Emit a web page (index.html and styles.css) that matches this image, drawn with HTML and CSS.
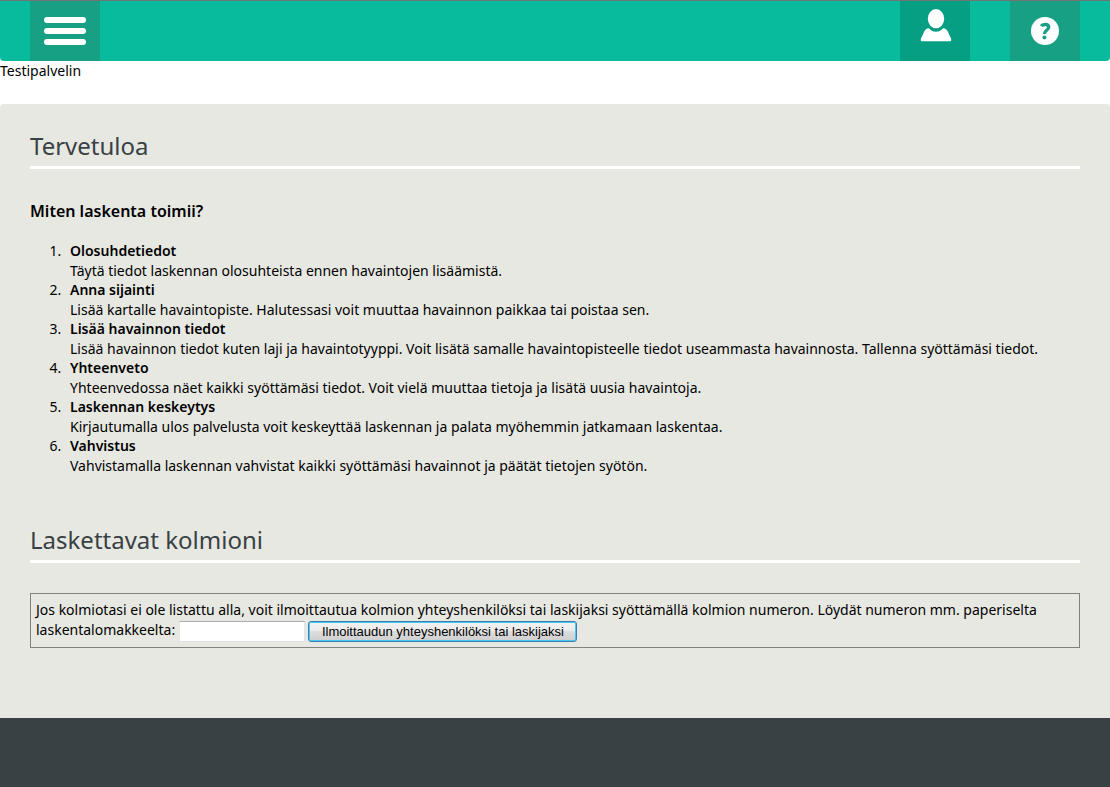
FILE: index.html
```html
<!DOCTYPE html>
<html lang="fi">
<head>
<meta charset="utf-8">
<title>Tervetuloa</title>
<link rel="stylesheet" href="styles.css">
</head>
<body>
<header class="topbar">
  <button class="bar-button" type="button" aria-label="Valikko">
    <svg width="42" height="28" viewBox="0 0 42 28" fill="#fff"><rect width="42" height="6" rx="3"/><rect y="11" width="42" height="6" rx="3"/><rect y="22" width="42" height="6" rx="3"/></svg>
  </button>
  <div class="bar-actions">
    <button class="bar-button bar-button-user" type="button" aria-label="Käyttäjä">
      <svg width="32" height="34" viewBox="0 0 32 34" fill="#fff"><ellipse cx="16" cy="9.7" rx="8.2" ry="9.6"/><path d="M9 19.200C12.500 24 19.500 24 23 19.200C25.500 19.400 26.500 20.200 27.500 22L31 29.500C31.700 31.500 31 32.300 29.500 32.300H2.500C1 32.300 .3 31.500 1 29.500L4.500 22C5.500 20.200 6.500 19.400 9 19.200Z"/></svg>
    </button>
    <button class="bar-button" type="button" aria-label="Ohje">
      <svg width="28" height="28" viewBox="0 0 28 28"><circle cx="14" cy="14" r="14" fill="#fff"/><path d="M10.300 9.200C11.500 7.200 17.700 6.100 17.700 10.300C17.700 13.100 13.500 13 13.500 17" fill="none" stroke="#18a085" stroke-width="3.400"/><circle cx="13.400" cy="20.400" r="2" fill="#18a085"/></svg>
    </button>
  </div>
</header>
<p class="server-note">Testipalvelin</p>
<main class="content">
  <h1 class="section-title">Tervetuloa</h1>
  <h2 class="subtitle">Miten laskenta toimii?</h2>
  <ol class="steps">
    <li><strong>Olosuhdetiedot</strong><p>Täytä tiedot laskennan olosuhteista ennen havaintojen lisäämistä.</p></li>
    <li><strong>Anna sijainti</strong><p>Lisää kartalle havaintopiste. Halutessasi voit muuttaa havainnon paikkaa tai poistaa sen.</p></li>
    <li><strong>Lisää havainnon tiedot</strong><p>Lisää havainnon tiedot kuten laji ja havaintotyyppi. Voit lisätä samalle havaintopisteelle tiedot useammasta havainnosta. Tallenna syöttämäsi tiedot.</p></li>
    <li><strong>Yhteenveto</strong><p>Yhteenvedossa näet kaikki syöttämäsi tiedot. Voit vielä muuttaa tietoja ja lisätä uusia havaintoja.</p></li>
    <li><strong>Laskennan keskeytys</strong><p>Kirjautumalla ulos palvelusta voit keskeyttää laskennan ja palata myöhemmin jatkamaan laskentaa.</p></li>
    <li><strong>Vahvistus</strong><p>Vahvistamalla laskennan vahvistat kaikki syöttämäsi havainnot ja päätät tietojen syötön.</p></li>
  </ol>
  <h1 class="section-title">Laskettavat kolmioni</h1>
  <form class="enroll">
    <label for="number">Jos kolmiotasi ei ole listattu alla, voit ilmoittautua kolmion yhteyshenkilöksi tai laskijaksi syöttämällä kolmion numeron. Löydät numeron mm. paperiselta laskentalomakkeelta:</label>
    <input class="enroll-input" id="number" type="text">
    <button class="enroll-button" type="button">Ilmoittaudun yhteyshenkilöksi tai laskijaksi</button>
  </form>
</main>
<footer class="footer"></footer>
</body>
</html>
```
FILE: styles.css
```css
* { box-sizing: border-box; }
body {
  margin: 0;
  min-height: 100vh;
  display: flex;
  flex-direction: column;
  background: #fff;
  color: #000;
  font: 14px/20px "Noto Sans", "Open Sans", sans-serif;
}
.topbar {
  display: flex;
  justify-content: space-between;
  padding: 0 30px;
  background: #07bb9c;
  border-top: 1px solid #737373;
  border-radius: 0 0 4px 4px;
}
.bar-actions { display: flex; gap: 40px; }
.bar-button {
  display: flex;
  align-items: center;
  justify-content: center;
  width: 70px;
  height: 60px;
  padding: 0;
  border: 0;
  background: #18a085;
}
.bar-button-user {
  align-items: flex-start;
  padding: 8px 0 0 2px;
  background: #079f83;
}
.server-note { margin: 0 0 23px; }
.content {
  flex: 1;
  padding: 24px 30px 70px;
  background: #e7e8e2;
  border-radius: 4px 4px 0 0;
}
.section-title {
  margin: 0 0 30px;
  padding-bottom: 2px;
  border-bottom: 3px solid #fff;
  color: #394144;
  font-size: 24px;
  line-height: 36px;
  font-weight: 400;
}
.subtitle { margin: 0 0 18px; font-size: 16px; line-height: 24px; font-weight: 600; }
.steps { margin: 0 0 47px; padding-left: 35px; }
.steps li { padding-left: 5px; }
.steps strong { font-weight: 600; }
.steps p { margin: 0; line-height: 19px; }
.enroll { padding: 6px 5px 5px; border: 1px solid #80827e; }
.enroll-input {
  width: 126px;
  height: 21px;
  border: 1px solid #e2e3ea;
  border-top-color: #abadb3;
  background: #fff;
  vertical-align: middle;
}
.enroll-button {
  min-width: 269px;
  height: 21px;
  padding: 0 9px;
  border: 1px solid #3c7fb1;
  border-radius: 3px;
  box-shadow: inset 0 0 0 1px #48c8f0;
  background: linear-gradient(#f2f2f2, #ebebeb 50%, #ddd 50%, #cfcfcf);
  color: #000;
  font: 13px/17px "Liberation Sans", Arial, sans-serif;
  vertical-align: middle;
}
.footer { height: 69px; background: #394144; }
```
